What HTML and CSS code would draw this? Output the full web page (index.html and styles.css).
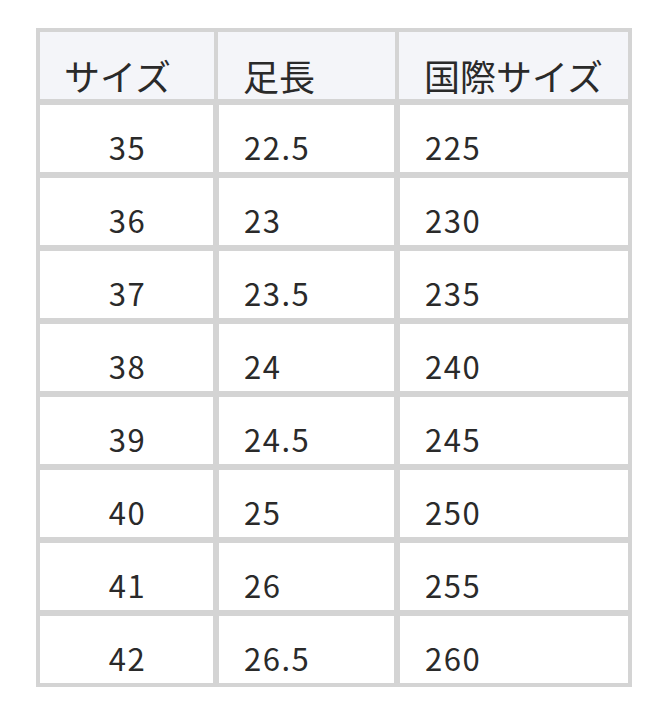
FILE: index.html
```html
<!DOCTYPE html>
<html lang="ja">
<head>
<meta charset="utf-8">
<link rel="stylesheet" href="styles.css">
</head>
<body>
<div class="wrap">
<table class="size-table">
  <colgroup>
    <col class="c1"><col class="c2"><col class="c3">
  </colgroup>
  <thead>
    <tr><th>サイズ</th><th>足長</th><th>国際サイズ</th></tr>
  </thead>
  <tbody>
    <tr><td>35</td><td>22.5</td><td>225</td></tr>
    <tr><td>36</td><td>23</td><td>230</td></tr>
    <tr><td>37</td><td>23.5</td><td>235</td></tr>
    <tr><td>38</td><td>24</td><td>240</td></tr>
    <tr><td>39</td><td>24.5</td><td>245</td></tr>
    <tr><td>40</td><td>25</td><td>250</td></tr>
    <tr><td>41</td><td>26</td><td>255</td></tr>
    <tr><td>42</td><td>26.5</td><td>260</td></tr>
  </tbody>
</table>
</div>
</body>
</html>
```
FILE: styles.css
```css
html, body {
  margin: 0;
  padding: 0;
  background: #ffffff;
}
.wrap {
  padding: 28px 0 0 36px;
}
.size-table {
  border-collapse: separate;
  border-spacing: 0;
  border: 4px solid #d4d4d4;
  table-layout: fixed;
  width: 596px;
  font-family: "Noto Sans CJK JP", "Noto Sans", sans-serif;
  color: #2a2a2a;
}
.c1 { width: 176px; }
.c2 { width: 181px; }
.c3 { width: 231px; }
.size-table th {
  background: #f4f5f9;
  font-weight: normal;
  font-size: 36px;
  line-height: 36px;
  text-align: left;
  vertical-align: top;
  padding: 25px 0 6px 25px;
  border-left: 2px solid #d4d4d4;
  border-right: 2px solid #d4d4d4;
}
.size-table td {
  font-size: 31px;
  line-height: 31px;
  letter-spacing: 1.5px;
  text-align: left;
  vertical-align: top;
  padding: 26px 0 10px 25px;
  border-top: 6px solid #d4d4d4;
  border-left: 3px solid #d4d4d4;
  border-right: 3px solid #d4d4d4;
}
.size-table th:first-child {
  border-left: 0;
  padding-left: 24px;
}
.size-table td:first-child {
  border-left: 0;
  text-align: center;
  padding-left: 2px;
}
.size-table th:last-child,
.size-table td:last-child {
  border-right: 0;
}
```
